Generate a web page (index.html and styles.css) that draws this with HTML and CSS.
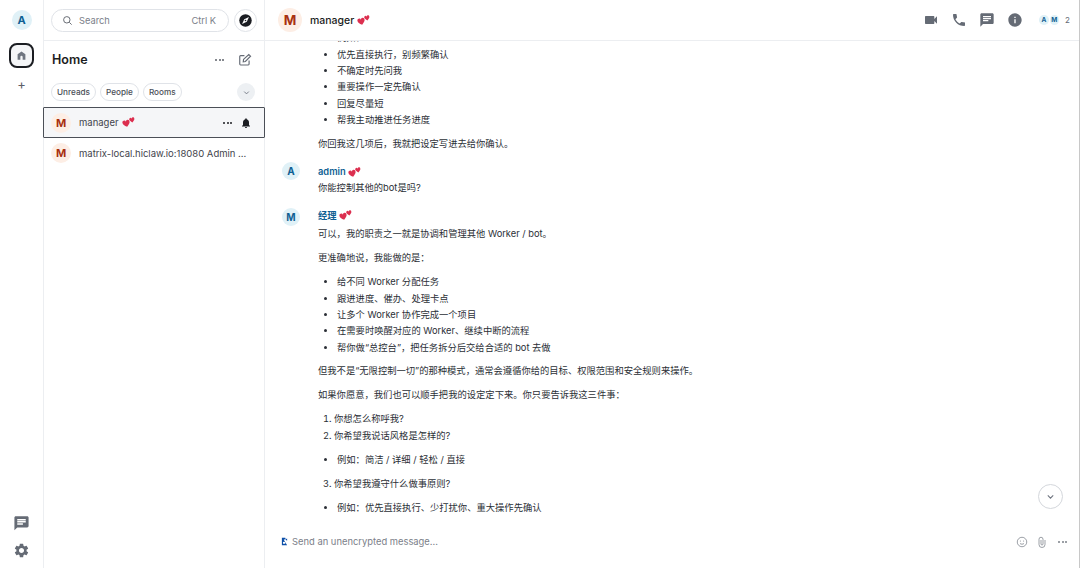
FILE: index.html
```html
<!DOCTYPE html>
<html lang="zh">
<head>
<meta charset="utf-8">
<title>manager</title>
<link rel="stylesheet" href="styles.css">
</head>
<body>
<svg class="defs" width="0" height="0" aria-hidden="true">
  <symbol id="hearts" viewBox="0 0 24 20">
    <path fill="#dc2f4f" transform="translate(0 4.500) rotate(-14 7 7) scale(.66)" d="M12 21C5 15 2 12 2 8a5 5 0 0 1 10-1.500A5 5 0 0 1 22 8c0 4-3 7-10 13z"/>
    <path fill="#dc2f4f" transform="translate(12.500 0) rotate(-10 5 5) scale(.48)" d="M12 21C5 15 2 12 2 8a5 5 0 0 1 10-1.500A5 5 0 0 1 22 8c0 4-3 7-10 13z"/>
  </symbol>
</svg>
<div class="app">
  <nav class="rail">
    <div class="avatar avatar-rail">A</div>
    <button class="home-btn" aria-label="Home">
      <svg viewBox="0 0 24 24" class="home-icon"><path d="M12 3 3.500 9.500V21h6v-6a2.500 2.500 0 0 1 5 0v6h6V9.500z"/></svg>
    </button>
    <div class="plus">+</div>
    <div class="rail-spacer"></div>
    <svg viewBox="0 0 24 24" class="rail-icon"><path d="M20 2H4c-1.100 0-2 .9-2 2v18l4-4h14c1.100 0 2-.9 2-2V4c0-1.100-.9-2-2-2zM6 9h12v2H6V9zm8 5H6v-2h8v2zm4-6H6V6h12v2z" transform="translate(0 1)"/></svg>
    <svg viewBox="0 0 24 24" class="rail-icon gear"><path d="M19.140 12.940c.04-.3.060-.61.060-.94 0-.32-.020-.64-.070-.94l2.030-1.580a.49.49 0 0 0 .12-.61l-1.920-3.320a.488.488 0 0 0-.59-.22l-2.390.96c-.5-.38-1.030-.7-1.620-.94l-.36-2.540a.484.484 0 0 0-.48-.41h-3.840c-.24 0-.43.17-.47.41l-.36 2.540c-.59.24-1.130.57-1.620.94l-2.390-.96c-.22-.08-.47 0-.59.22L2.740 8.870c-.12.21-.08.47.12.61l2.030 1.580c-.05.3-.09.63-.09.94s.020.64.070.94l-2.030 1.580a.49.49 0 0 0-.12.61l1.920 3.320c.12.22.37.29.59.22l2.390-.96c.5.38 1.030.7 1.620.94l.36 2.540c.05.24.24.41.48.41h3.840c.24 0 .44-.17.47-.41l.36-2.540c.59-.24 1.130-.56 1.620-.94l2.390.96c.22.08.47 0 .59-.22l1.920-3.320c.12-.22.070-.47-.12-.61l-2.010-1.580zM12 15.600c-1.980 0-3.600-1.620-3.600-3.600s1.620-3.600 3.600-3.600 3.600 1.620 3.600 3.600-1.620 3.600-3.600 3.600z"/></svg>
  </nav>

  <aside class="side">
    <div class="search-row">
      <div class="search">
        <svg viewBox="0 0 24 24" class="search-icon"><circle cx="10.500" cy="10.500" r="7"/><path d="m16 16 5 5"/></svg>
        <span class="search-label">Search</span>
        <span class="search-key">Ctrl K</span>
      </div>
      <button class="explore" aria-label="Explore">
        <svg viewBox="0 0 24 24"><circle cx="12" cy="12" r="10" fill="#1b1d22"/><path d="m17.500 6.500-3.500 7.500-7.500 3.500 3.500-7.500z" fill="#fff"/><circle cx="12" cy="12" r="1.300" fill="#1b1d22"/></svg>
      </button>
    </div>
    <div class="side-head">
      <h1>Home</h1>
      <span class="dots dots-head"><i></i><i></i><i></i></span>
      <svg viewBox="0 0 24 24" class="compose"><path d="M19 13v6a1.500 1.500 0 0 1-1.500 1.500h-13A1.500 1.500 0 0 1 3 19V6a1.500 1.500 0 0 1 1.500-1.500H11"/><path d="M9.500 11 18.500 2.500l3 3-8.800 9-3.700.7z"/></svg>
    </div>
    <div class="filters">
      <span class="chip">Unreads</span>
      <span class="chip">People</span>
      <span class="chip">Rooms</span>
      <span class="chev-btn"><svg viewBox="0 0 24 24"><path d="m7 10 5 5 5-5"/></svg></span>
    </div>
    <div class="room room-active">
      <div class="avatar avatar-m">M</div>
      <span class="room-name">manager <svg class="hearts"><use href="#hearts"/></svg></span>
      <span class="dots dots-dark"><i></i><i></i><i></i></span>
      <svg viewBox="0 0 24 24" class="bell"><path d="M12 22c1.100 0 2-.9 2-2h-4c0 1.100.89 2 2 2zm6-6v-5c0-3.070-1.640-5.640-4.500-6.320V4c0-.83-.67-1.500-1.500-1.500s-1.500.67-1.500 1.500v.68C7.630 5.360 6 7.920 6 11v5l-2 2v1h16v-1l-2-2z"/></svg>
    </div>
    <div class="room">
      <div class="avatar avatar-m">M</div>
      <span class="room-name">matrix-local.hiclaw.io:18080 Admin ...</span>
    </div>
  </aside>

  <main class="main">
    <header class="top">
      <div class="avatar avatar-top">M</div>
      <span class="top-name">manager <svg class="hearts"><use href="#hearts"/></svg></span>
      <div class="top-icons">
        <svg viewBox="0 0 24 24"><path d="M17 10.500V7c0-.55-.45-1-1-1H4c-.55 0-1 .45-1 1v10c0 .55.45 1 1 1h12c.55 0 1-.45 1-1v-3.500l4 4v-11l-4 4z"/></svg>
        <svg viewBox="0 0 24 24"><path d="M6.620 10.790c1.440 2.830 3.760 5.140 6.590 6.590l2.200-2.200c.27-.27.67-.36 1.020-.24 1.120.37 2.330.57 3.570.57.55 0 1 .45 1 1V20c0 .55-.45 1-1 1-9.390 0-17-7.610-17-17 0-.55.45-1 1-1h3.500c.55 0 1 .45 1 1 0 1.250.2 2.450.57 3.570.11.35.030.74-.25 1.020l-2.200 2.200z"/></svg>
        <svg viewBox="0 0 24 24"><path d="M20 2H4c-1.100 0-2 .9-2 2v18l4-4h14c1.100 0 2-.9 2-2V4c0-1.100-.9-2-2-2zM6 9h12v2H6V9zm8 5H6v-2h8v2zm4-6H6V6h12v2z"/></svg>
        <svg viewBox="0 0 24 24"><path d="M12 2C6.480 2 2 6.480 2 12s4.480 10 10 10 10-4.480 10-10S17.520 2 12 2zm1 15h-2v-6h2v6zm0-8h-2V7h2v2z"/></svg>
      </div>
      <div class="faces">
        <span class="face">A</span><span class="face">M</span>
        <span class="face-count">2</span>
      </div>
    </header>

    <section class="timeline">
      <div class="scroll">
        <div class="body msg-first">
          <ul>
            <li>例如：</li>
            <li>优先直接执行，别频繁确认</li>
            <li>不确定时先问我</li>
            <li>重要操作一定先确认</li>
            <li>回复尽量短</li>
            <li>帮我主动推进任务进度</li>
          </ul>
          <p>你回我这几项后，我就把设定写进去给你确认。</p>
        </div>
        <article class="msg">
          <div class="avatar avatar-msg">A</div>
          <div class="body">
            <div class="sender">admin <svg class="hearts"><use href="#hearts"/></svg></div>
            <p>你能控制其他的bot是吗?</p>
          </div>
        </article>
        <article class="msg">
          <div class="avatar avatar-msg">M</div>
          <div class="body">
            <div class="sender">经理 <svg class="hearts"><use href="#hearts"/></svg></div>
            <p>可以，我的职责之一就是协调和管理其他 Worker / bot。</p>
            <p>更准确地说，我能做的是：</p>
            <ul>
              <li>给不同 Worker 分配任务</li>
              <li>跟进进度、催办、处理卡点</li>
              <li>让多个 Worker 协作完成一个项目</li>
              <li>在需要时唤醒对应的 Worker、继续中断的流程</li>
              <li>帮你做“总控台”，把任务拆分后交给合适的 bot 去做</li>
            </ul>
            <p>但我不是“无限控制一切”的那种模式，通常会遵循你给的目标、权限范围和安全规则来操作。</p>
            <p>如果你愿意，我们也可以顺手把我的设定定下来。你只要告诉我这三件事：</p>
            <ol>
              <li>你想怎么称呼我?</li>
              <li>你希望我说话风格是怎样的?
                <ul><li>例如：简洁 / 详细 / 轻松 / 直接</li></ul>
              </li>
              <li>你希望我遵守什么做事原则?
                <ul><li>例如：优先直接执行、少打扰你、重大操作先确认</li></ul>
              </li>
            </ol>
          </div>
        </article>
      </div>
      <button class="jump" aria-label="Jump to bottom"><svg viewBox="0 0 24 24"><path d="m7 10 5 5 5-5"/></svg></button>
    </section>

    <footer class="composer">
      <svg viewBox="0 0 24 24" class="lock"><path d="M5 2h9l1 3-5 2 9 15H5z" fill="#0d4fa8"/><path d="M14 6.500 19 4v6z" fill="#0d4fa8"/><path d="M8 13h6v5H8z" fill="#fff"/></svg>
      <span class="placeholder">Send an unencrypted message...</span>
      <div class="composer-icons">
        <svg viewBox="0 0 24 24" class="line-icon"><circle cx="12" cy="12" r="9.500"/><circle cx="8.700" cy="10" r="1" class="fill"/><circle cx="15.300" cy="10" r="1" class="fill"/><path d="M8 15c2.500 1.800 5.500 1.800 8 0"/></svg>
        <svg viewBox="0 0 24 24" class="line-icon"><path d="M18 8v9a6 6 0 0 1-12 0V6.500a4 4 0 0 1 8 0V16a2 2 0 0 1-4 0V8"/></svg>
        <span class="dots dots-light"><i></i><i></i><i></i></span>
      </div>
    </footer>
  </main>
</div>
</body>
</html>
```

FILE: styles.css
```css
* { box-sizing: border-box; }
html, body { margin: 0; height: 100%; overflow: hidden; background: #fff; }
body { font-family: Inter, "Noto Sans CJK SC", sans-serif; color: #2b2f36; }
.defs { position: absolute; }
button { border: 0; background: none; padding: 0; }
.app { display: flex; height: 568px; width: 1080px; border-right: 1px solid #c8c8c8; }

.avatar { display: flex; align-items: center; justify-content: center; border-radius: 50%; font-weight: 700; flex: none; }
.rail { width: 44px; flex: none; display: flex; flex-direction: column; align-items: center; border-right: 1px solid #eceef1; padding: 10px 0 9px; }
.avatar-rail { width: 20px; height: 20px; background: #e0f1f7; color: #0f5f93; font-size: 11px; }
.home-btn { width: 25px; height: 25px; margin-top: 13px; border: 2px solid #1b1d22; border-radius: 8px; background: #f4f5f7; display: flex; align-items: center; justify-content: center; }
.home-icon { width: 11px; height: 11px; fill: #6f7580; }
.plus { margin-top: 8px; font-size: 13px; line-height: 16px; color: #5c6069; }
.rail-spacer { flex: 1; }
.rail-icon { width: 17px; height: 17px; fill: #656b75; margin-top: 10px; }
.rail-icon.gear { margin-top: 11px; }

.side { width: 221px; flex: none; display: flex; flex-direction: column; border-right: 1px solid #eceef1; }
.search-row { height: 41px; display: flex; align-items: center; gap: 5px; padding: 0 7px; border-bottom: 1px solid #eceef1; }
.search { width: 178px; height: 23px; border: 1px solid #e0e3e8; border-radius: 12px; display: flex; align-items: center; padding: 0 12px 0 10px; font-size: 9.300px; color: #7b8089; }
.search-icon { width: 11px; height: 11px; fill: none; stroke: #5c6069; stroke-width: 2; margin-right: 6px; }
.search-label { flex: 1; }
.explore { width: 23px; height: 23px; border: 1px solid #e0e3e8; border-radius: 50%; display: flex; align-items: center; justify-content: center; }
.explore svg { width: 15px; height: 15px; }
.side-head { display: flex; align-items: center; height: 37px; padding: 0 12px 0 8px; }
.side-head h1 { flex: 1; margin: 0; font-size: 12.500px; font-weight: 600; color: #1b1d22; }
.dots { display: inline-flex; gap: 1.500px; align-items: center; }
.dots i { width: 2px; height: 2px; border-radius: 50%; background: currentColor; }
.dots-head { color: #5c6069; margin-right: 14px; }
.compose { width: 14px; height: 14px; fill: none; stroke: #656b75; stroke-width: 2; }
.filters { display: flex; align-items: center; gap: 4px; padding: 0 0 0 7px; height: 28px; }
.chip { height: 18px; padding: 0 5px; border: 1px solid #e0e3e8; border-radius: 9px; font-size: 8.200px; line-height: 16px; font-weight: 500; color: #4b5058; }
.chev-btn { width: 18px; height: 18px; margin-left: auto; margin-right: 9px; border-radius: 50%; background: #edf0f3; display: flex; align-items: center; justify-content: center; }
.chev-btn svg { width: 11px; height: 11px; fill: none; stroke: #6f7580; stroke-width: 2; }
.room { height: 30px; display: flex; align-items: center; padding: 0 7px; font-size: 9.500px; color: #3f444c; }
.room-active { height: 31px; margin: 1px 0 0 -1px; width: 222px; border: 1px solid #4b4f57; border-radius: 1px; background: #f5f6f8; padding: 0 12px 0 7px; }
.avatar-m { width: 20px; height: 20px; background: #fdeee5; color: #a8300f; font-size: 11px; margin-right: 8px; }
.room-name { flex: 1; display: flex; align-items: center; gap: 3px; white-space: nowrap; }
.dots-dark { color: #1b1d22; margin-right: 8px; }
.bell { width: 12px; height: 12px; fill: #1b1d22; }
.hearts { width: 13px; height: 11px; }

.main { flex: 1; min-width: 0; display: flex; flex-direction: column; }
.top { height: 41px; flex: none; display: flex; align-items: center; padding: 0 9px 0 13px; border-bottom: 1px solid #eceef1; }
.avatar-top { width: 24px; height: 24px; background: #fdeee5; color: #a8300f; font-size: 13.500px; margin-right: 8px; }
.top-name { flex: 1; display: flex; align-items: center; gap: 3px; font-size: 10.500px; font-weight: 500; color: #1b1d22; }
.top-icons { display: flex; gap: 12px; margin-right: 16px; }
.top-icons svg { width: 16px; height: 16px; fill: #656b75; }
.faces { display: flex; align-items: center; gap: 1px; }
.face { width: 9.500px; height: 9.500px; border-radius: 50%; background: #e0f1f7; color: #0f5f93; font-size: 6.500px; font-weight: 700; display: flex; align-items: center; justify-content: center; }
.face-count { font-size: 8px; color: #656b75; margin-left: 5px; }

.timeline { flex: 1; min-height: 0; position: relative; }
.scroll { height: 100%; overflow: hidden; display: flex; flex-direction: column; justify-content: flex-end; padding: 0 0 9px 17px; font-size: 9.300px; line-height: 16.300px; color: #2b2f36; }
.msg-first { flex: none; margin-left: 36px; }
.msg { display: flex; flex: none; margin-top: 11px; }
.msg-first + .msg { margin-top: 10px; }
.avatar-msg { width: 18px; height: 18px; background: #e0f1f7; color: #0f5f93; font-size: 10px; margin-right: 18px; }
.body p { margin: 0; }
.body p + p, .body p + ul, .body p + ol { margin-top: 8px; }
.body ul + p { margin-top: 7px; }
.msg-first.body ul + p { margin-top: 8px; }
.sender { display: flex; align-items: center; gap: 2px; height: 16px; font-weight: 600; color: #0f5f93; }
.body .sender + p { margin-top: 2px; }
.msg-first + .msg .sender { margin-top: 2px; }
.msg-first + .msg .body .sender + p { margin-top: 0; }
ul, ol { margin: 0; padding: 0 0 0 19px; }
ol { padding-left: 16px; }
ol ul { margin: 7.700px 0; padding-left: 3px; list-style-type: disc; }
ol > li:last-child ul { margin-bottom: 0; }
.jump { position: absolute; right: 16px; bottom: 16px; width: 25px; height: 25px; border: 1px solid #d4d7dc; border-radius: 50%; background: #fff; display: flex; align-items: center; justify-content: center; }
.jump svg { width: 13px; height: 13px; fill: none; stroke: #6f7580; stroke-width: 2; }

.composer { height: 43px; flex: none; display: flex; align-items: center; padding: 0 12px 10px 15px; }
.lock { width: 9px; height: 9px; margin-right: 3px; }
.placeholder { flex: 1; font-size: 9.400px; color: #7b8089; }
.composer-icons { display: flex; align-items: center; gap: 8px; }
.line-icon { width: 12px; height: 12px; fill: none; stroke: #7b8089; stroke-width: 1.500; }
.line-icon .fill { fill: #7b8089; stroke: none; }
.dots-light { color: #7b8089; margin-left: 2px; }
```
